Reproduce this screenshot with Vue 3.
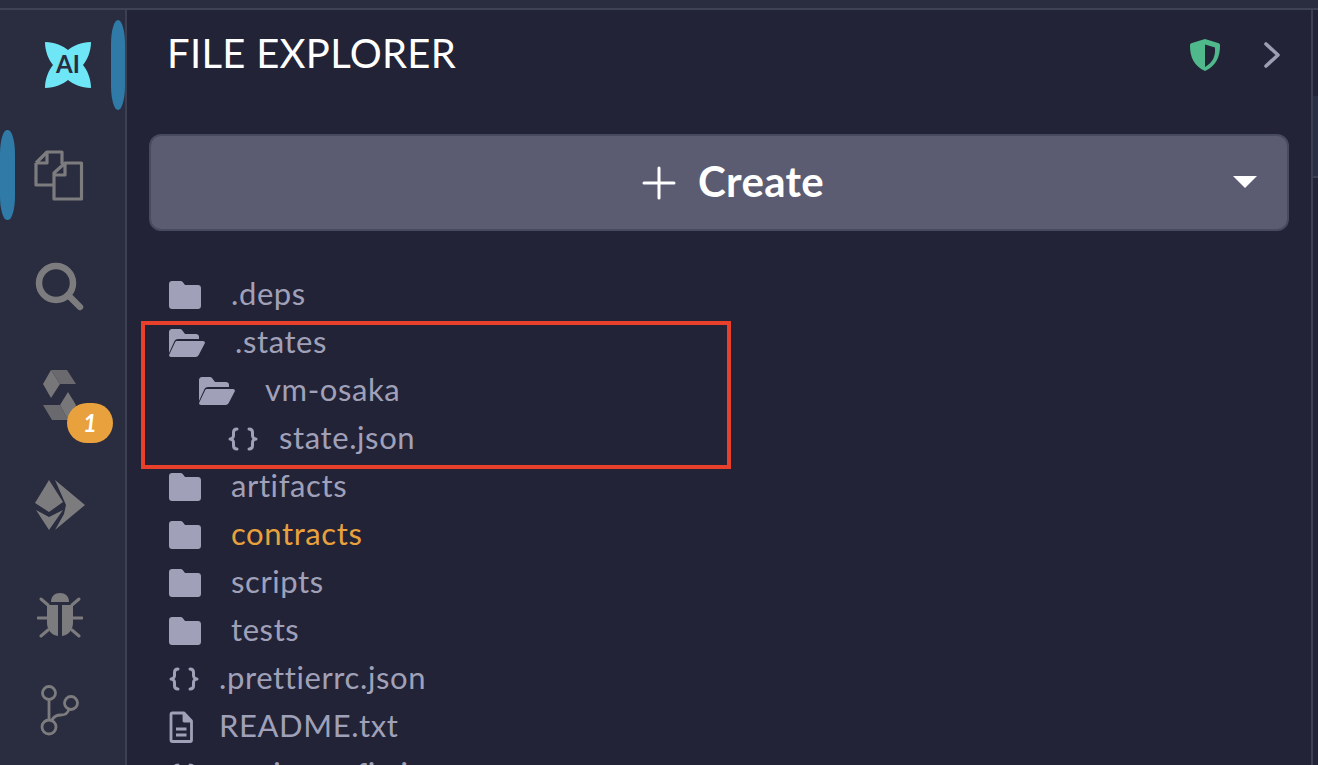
<script setup>
const rows = [
  { name: '.deps', type: 'folder', cls: 'r-deps' },
  { name: '.states', type: 'open', cls: 'r-states' },
  { name: 'vm-osaka', type: 'open', cls: 'r-vm' },
  { name: 'state.json', type: 'json', cls: 'r-state' },
  { name: 'artifacts', type: 'folder', cls: 'r-f' },
  { name: 'contracts', type: 'folder', cls: 'r-f accent' },
  { name: 'scripts', type: 'folder', cls: 'r-f' },
  { name: 'tests', type: 'folder', cls: 'r-f' },
  { name: '.prettierrc.json', type: 'json', cls: 'r-file' },
  { name: 'README.txt', type: 'doc', cls: 'r-file' },
  { name: 'remix.config.json', type: 'json', cls: 'r-file' }
]
</script>

<template>
  <div class="page">
    <div class="topbar"></div>
    <div class="body">
      <aside class="side">
        <div class="item logo">
          <svg width="50" height="50" viewBox="0 0 50 50">
            <path fill="#6ee6f5" d="M2 2C12 2 20 6 25 10 30 6 38 2 48 2 48 12 44 20 40 25 44 30 48 38 48 48 38 48 30 44 25 40 20 44 12 48 2 48 2 38 6 30 10 25 6 20 2 12 2 2z"/>
            <text x="25" y="33" text-anchor="middle" class="ai">AI</text>
          </svg>
        </div>
        <div class="item">
          <svg width="52" height="52" viewBox="0 0 52 52" fill="none" stroke="#7c7c7e" stroke-width="3.2" stroke-linejoin="round">
            <path d="M2 14 13 3h15v12M2 14v22h17M13 3v11H2"/>
            <path d="M20 37v-13l11-10h16.500v36H20zM20 26h11V14"/>
          </svg>
        </div>
        <div class="item search">
          <svg width="50" height="50" viewBox="0 0 50 50" fill="none" stroke="#7c7c7e">
            <circle cx="21" cy="21" r="17" stroke-width="6.500"/>
            <path d="M33 33 45 45" stroke-width="6.500" stroke-linecap="round"/>
          </svg>
        </div>
        <div class="item">
          <svg width="34" height="52" viewBox="0 0 34 52">
            <path fill="#77777a" d="M8 1 17 15 8 29 0 15z"/>
            <path fill="#6a6a6e" d="M8 1h16l9 14H17z"/>
            <path fill="#77777a" d="M25 23 33 36 25 51 17 36z"/>
            <path fill="#6a6a6e" d="M0 36h17l8 15H9z"/>
          </svg>
          <span class="badge">1</span>
        </div>
        <div class="item">
          <svg width="52" height="54" viewBox="0 0 52 54" fill="#7c7c7e">
            <path d="M15 2 1 25l14 9 14-10z"/>
            <path d="M2 32l13 7 14-7-14 20z"/>
            <path d="M21 2 51 27 21 52l9-16 2-9z"/>
          </svg>
        </div>
        <div class="item">
          <svg width="46" height="46" viewBox="0 0 46 46" fill="#7c7c7e">
            <path d="M14 10C14 4 18 1 23 1s9 3 9 9z"/>
            <path d="M11 13h10v31c-6-.500-11-6-11-13V14zM25 13h10l1 1v17c0 7-5 12.500-11 13z"/>
            <g stroke="#7c7c7e" stroke-width="3" stroke-linecap="round" fill="none">
              <path d="M4 7 11 13M42 7 35 13M1 26h9M36 26h9M4 44l7-6M42 44l-7-6"/>
            </g>
          </svg>
        </div>
        <div class="item git">
          <svg width="40" height="52" viewBox="0 0 40 52" fill="none" stroke="#7c7c7e" stroke-width="2.800">
            <circle cx="9" cy="9" r="6.500"/>
            <circle cx="9" cy="43" r="7"/>
            <circle cx="31" cy="19" r="6.500"/>
            <path d="M9 15.500v21M12 36c2-4 6-5 9-5 5 0 7-2 8-6"/>
          </svg>
        </div>
        <i class="pill pill-top"></i>
        <i class="pill pill-left"></i>
      </aside>

      <main class="panel">
        <header class="head">
          <h1>FILE EXPLORER</h1>
          <div class="tools">
            <svg width="32" height="34" viewBox="0 0 32 34">
              <path fill="#4fb98c" d="M16 1 29 5c2 .6 2 1.500 2 3 0 11-4 20-15 25C5 28 1 19 1 8c0-1.500 0-2.400 2-3z"/>
              <path fill="#222336" d="M16 6.500 26 9.500c.5 8-1.500 14.500-10 19.500z"/>
            </svg>
            <svg width="16" height="26" viewBox="0 0 16 26" fill="none" stroke="#9d9db3" stroke-width="3.600" stroke-linecap="round" stroke-linejoin="round">
              <path d="M2 2 14 13 2 24"/>
            </svg>
          </div>
        </header>

        <div class="create">
          <svg width="34" height="34" viewBox="0 0 34 34" stroke="#fff" stroke-width="3" stroke-linecap="round">
            <path d="M17 2v30M2 17h30"/>
          </svg>
          <span>Create</span>
          <i class="caret"></i>
        </div>

        <ul class="tree">
          <li v-for="r in rows" :key="r.name" class="row" :class="r.cls">
            <svg v-if="r.type === 'folder'" class="ic" width="32" height="28" viewBox="0 0 32 28" fill="#a0a1b9">
              <path d="M0 3C0 1.300 1.300 0 3 0h8.500c1 0 1.800.4 2.400 1.200L16 4h13c1.700 0 3 1.300 3 3v18c0 1.700-1.300 3-3 3H3c-1.700 0-3-1.300-3-3z"/>
            </svg>
            <svg v-else-if="r.type === 'open'" class="ic" width="36" height="28" viewBox="0 0 36 28" fill="#a0a1b9">
              <path d="M0 24V3C0 1.500 1 0 3 0h8c.8 0 1.500.3 2 1l3 4h11c1.500 0 3 1 3 2.500V10H9c-1.500 0-2.800.8-3.500 2z"/>
              <path d="M8 12h26c1.500 0 2.300 1.300 1.700 2.500l-6 11.500c-.7 1.300-1.800 2-3.200 2H2c-1.500 0-2.300-1.300-1.700-2.500L6 13.500c.4-1 1-1.500 2-1.500z"/>
            </svg>
            <svg v-else-if="r.type === 'json'" class="ic" width="30" height="24" viewBox="0 0 30 24" fill="none" stroke="#a0a1b9" stroke-width="3" stroke-linejoin="round" stroke-linecap="round">
              <path d="M9 2C6 2 5.500 3.500 5.500 5.500v3C5.500 10.500 4 12 2 12c2 0 3.500 1.500 3.500 3.500v3c0 2 .5 3.500 3.500 3.500"/>
              <path d="M21 2c3 0 3.500 1.500 3.500 3.500v3c0 2 1.500 3.500 3.500 3.500-2 0-3.500 1.500-3.500 3.500v3c0 2-.5 3.500-3.500 3.500"/>
            </svg>
            <svg v-else class="ic" width="24" height="32" viewBox="0 0 24 32" fill="none" stroke="#a0a1b9" stroke-width="2.800" stroke-linejoin="round">
              <path d="M2 3.500C2 2.500 2.500 2 3.500 2H15l7.500 8v19c0 1-.5 1.500-1.500 1.500H3.500c-1 0-1.500-.5-1.500-1.500z"/>
              <path d="M15 2v8h7.500" fill="#a0a1b9"/>
              <path d="M7 18h10.500M7 24h10.500"/>
            </svg>
            <span class="name">{{ r.name }}</span>
          </li>
        </ul>

        <div class="mark"></div>
      </main>

      <div class="gutter"><div class="gut-block"></div></div>
    </div>
  </div>
</template>

<style>
html, body { margin: 0; background: #222336; }
</style>

<style scoped>
.page { width: 1318px; height: 765px; overflow: hidden; background: #222336; display: flex; flex-direction: column; font-family: "Lato", "Noto Sans", sans-serif; }
.topbar { height: 8px; flex: none; background: #2a2c3f; border-bottom: 2px solid #3f4155; }
.body { flex: 1; display: flex; min-height: 0; }
.side { position: relative; width: 125px; flex: none; background: #2a2c3f; border-right: 2px solid #3c3e52; display: flex; flex-direction: column; }
.item { height: 110px; flex: none; display: flex; align-items: center; justify-content: center; padding-right: 5px; box-sizing: border-box; position: relative; }
.logo { padding: 0 0 0 11px; }
.search { padding-top: 4px; }
.git { height: 80px; }
.ai { font: 700 24px "Lato", sans-serif; fill: #2a2c3f; }
.badge { position: absolute; left: 67px; top: 63px; width: 46px; height: 40px; border-radius: 20px; background: #e8a13c; color: #fff; font: italic 700 24px/40px "Lato", sans-serif; text-align: center; }
.pill { position: absolute; display: block; background: #2f7aa6; border-radius: 7px / 24px; }
.pill-top { left: 111px; top: 10px; width: 14px; height: 90px; }
.pill-left { left: 0; top: 120px; width: 15px; height: 90px; }
.panel { position: relative; flex: 1; min-width: 0; padding: 0 22px; box-sizing: border-box; }
.head { height: 90px; display: flex; align-items: center; justify-content: space-between; padding: 0 0 0 18px; }
.head h1 { margin: 0 0 4px; font-weight: 400; font-size: 40px; color: #fff; letter-spacing: 0.3px; }
.tools { display: flex; align-items: center; gap: 43px; padding-right: 9px; }
.create { position: relative; margin-top: 34px; height: 97px; box-sizing: border-box; background: #5b5c72; border: 2px solid #484a5f; border-radius: 12px; display: flex; align-items: center; justify-content: center; gap: 22px; padding-left: 28px; color: #fff; font-weight: 700; font-size: 42px; letter-spacing: 0.3px; }
.create svg { flex: none; }
.create span { margin-bottom: 4px; }
.caret { position: absolute; right: 30px; top: 40px; border-left: 12px solid transparent; border-right: 12px solid transparent; border-top: 12px solid #fff; }
.tree { list-style: none; margin: 40px 0 0; padding: 0; }
.row { height: 48px; display: flex; align-items: center; color: #a0a1b9; font-size: 31px; letter-spacing: 0.6px; padding-left: 20px; position: relative; }
.ic { flex: none; }
.name { margin-bottom: 4px; }
.accent { color: #e8a13c; }
.r-deps .name, .r-f .name, .r-states .name { margin-left: 30px; }
.r-vm { padding-left: 50px; }
.r-vm .name { margin-left: 30px; }
.r-state { padding-left: 79px; }
.r-state .name { margin-left: 21px; }
.r-file .name { position: absolute; left: 70px; }
.mark { position: absolute; left: 14px; top: 311px; width: 590px; height: 148px; box-sizing: border-box; border: 4px solid #e8402a; pointer-events: none; }
.gutter { width: 5px; flex: none; border-left: 2px solid #3c3e52; position: relative; }
.gut-block { position: absolute; left: 0; right: 0; top: 86px; height: 80px; background: #2a2f45; border-bottom: 2px solid #3c3e52; }
</style>
